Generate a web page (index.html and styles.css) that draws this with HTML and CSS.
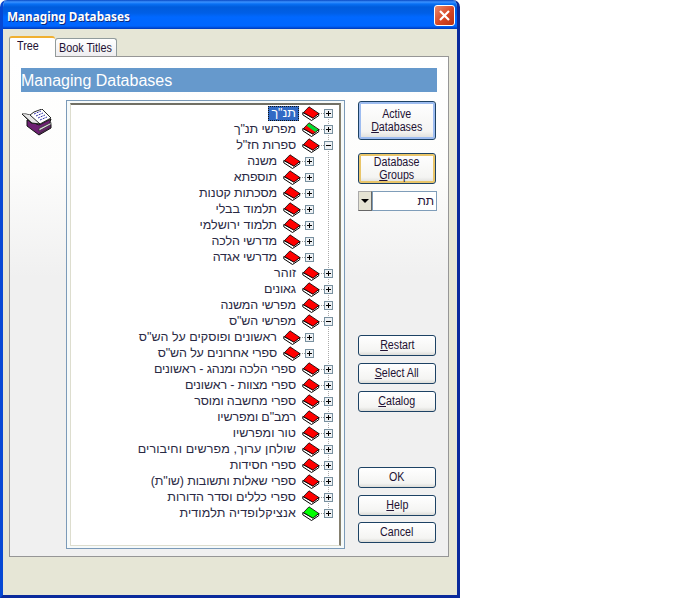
FILE: index.html
```html
<!DOCTYPE html>
<html lang="en">
<head>
<meta charset="utf-8">
<title>Managing Databases</title>
<link rel="stylesheet" href="styles.css">
</head>
<body>
<svg class="defs" width="0" height="0">
<symbol id="book" viewBox="0 0 18 15">
<path d="M.8 6.500v2.300L9.500 14.500l7.200-4.800v-2.200L10.500 11.800z" fill="#fff" stroke="#000"/>
<path d="M1.500 6.500L7 .8l9.800 6.600L11 12.200z" fill="currentColor" stroke="#000" stroke-width=".8"/>
</symbol>
<symbol id="half" viewBox="0 0 18 15">
<use href="#book"/><path d="M7 1.300L16.300 7.400 13.300 9.900 4.600 3.700z" fill="#0d3"/>
</symbol>
</svg>
<main class="window">
<header class="titlebar"><h1>Managing Databases</h1>
<button class="close" aria-label="Close"><svg width="11" height="11"><path d="M1 1l9 9M10 1L1 10" stroke="#fff" stroke-width="2.200"/></svg></button></header>
<nav class="tabs"><span class="tab active"><span>Tree</span></span><span class="tab"><span>Book Titles</span></span></nav>
<section class="panel">
<h2>Managing Databases</h2>
<div class="content">
<svg class="logo" width="33" height="28" viewBox="0 0 33 28">
<path d="M6 11v6l12 9 12-7v-3l-1-3 1-3-12 6z" fill="#6d2072" stroke="#111"/>
<path d="M18 19.500l12-6v2l-12 6.500zM18 24.500l12-6.500" fill="#ddd" stroke="#333" stroke-width=".8"/>
<path d="M1 5h4l4 1 4-3 8-3 9 9-11 6-9-1z" fill="#fff" stroke="#111" stroke-width=".9"/>
<path d="M1 5l10 9 8 1L9 6" fill="#e8e8e8" stroke="#111" stroke-width=".9"/>
<path d="M13 5l7-3M15 7l7-3M17 9l7-3M19 11l7-3" stroke="#33a" stroke-dasharray="2 1"/>
</svg>
<div class="frame"><ul class="tree" dir="rtl" lang="he">
<li><i class="plus"></i><svg><use href="#book"/></svg><span class="selected">תנ"ך</span></li>
<li><i class="plus"></i><svg><use href="#half"/></svg><span class="tight">מפרשי תנ"ך</span></li>
<li><i></i><svg><use href="#book"/></svg><span class="tight">ספרות חז"ל</span></li>
<li class="child"><i class="plus"></i><svg><use href="#book"/></svg><span class="tight">משנה</span></li>
<li class="child"><i class="plus"></i><svg><use href="#book"/></svg><span class="tight">תוספתא</span></li>
<li class="child"><i class="plus"></i><svg><use href="#book"/></svg><span class="tight">מסכתות קטנות</span></li>
<li class="child"><i class="plus"></i><svg><use href="#book"/></svg><span>תלמוד בבלי</span></li>
<li class="child"><i class="plus"></i><svg><use href="#book"/></svg><span>תלמוד ירושלמי</span></li>
<li class="child"><i class="plus"></i><svg><use href="#book"/></svg><span class="tight">מדרשי הלכה</span></li>
<li class="child"><i class="plus"></i><svg><use href="#book"/></svg><span class="tight">מדרשי אגדה</span></li>
<li><i class="plus"></i><svg><use href="#book"/></svg><span>זוהר</span></li>
<li><i class="plus"></i><svg><use href="#book"/></svg><span class="tight">גאונים</span></li>
<li><i class="plus"></i><svg><use href="#book"/></svg><span class="tight">מפרשי המשנה</span></li>
<li><i></i><svg><use href="#book"/></svg><span class="tight">מפרשי הש"ס</span></li>
<li class="child"><i class="plus"></i><svg><use href="#book"/></svg><span>ראשונים ופוסקים על הש"ס</span></li>
<li class="child"><i class="plus"></i><svg><use href="#book"/></svg><span class="tight">ספרי אחרונים על הש"ס</span></li>
<li><i class="plus"></i><svg><use href="#book"/></svg><span class="tight">ספרי הלכה ומנהג - ראשונים</span></li>
<li><i class="plus"></i><svg><use href="#book"/></svg><span class="tight">ספרי מצוות - ראשונים</span></li>
<li><i class="plus"></i><svg><use href="#book"/></svg><span class="tight">ספרי מחשבה ומוסר</span></li>
<li><i class="plus"></i><svg><use href="#book"/></svg><span class="tight">רמב"ם ומפרשיו</span></li>
<li><i class="plus"></i><svg><use href="#book"/></svg><span>טור ומפרשיו</span></li>
<li><i class="plus"></i><svg><use href="#book"/></svg><span class="loose">שולחן ערוך, מפרשים וחיבורים</span></li>
<li><i class="plus"></i><svg><use href="#book"/></svg><span class="tight">ספרי חסידות</span></li>
<li><i class="plus"></i><svg><use href="#book"/></svg><span class="tight">ספרי שאלות ותשובות (שו"ת)</span></li>
<li><i class="plus"></i><svg><use href="#book"/></svg><span>ספרי כללים וסדר הדורות</span></li>
<li><i class="plus"></i><svg class="green"><use href="#book"/></svg><span class="loose">אנציקלופדיה תלמודית</span></li>
</ul></div>
<div class="side">
<button class="tall focus"><span>Active<br><u>D</u>atabases</span></button>
<button class="mid hot"><span>Database<br><u>G</u>roups</span></button>
<div class="combo"><span class="drop"></span><span class="value">תת</span></div>
<button class="restart"><span><u>R</u>estart</span></button>
<button><span><u>S</u>elect All</span></button>
<button><span><u>C</u>atalog</span></button>
<button class="ok"><span>OK</span></button>
<button><span><u>H</u>elp</span></button>
<button class="cancel"><span>Cancel</span></button>
</div>
</div>
</section>
</main>
</body>
</html>
```
FILE: styles.css
```css
* { box-sizing: border-box; }
body { margin: 0; background: #fff; font: 12px/13px "Liberation Sans", Arial, sans-serif; color: #213; overflow: hidden; }
.defs { display: block; height: 0; }
h1, h2, ul { margin: 0; padding: 0; }
.window { width: 460px; height: 598px; background: #e6e6d6; border: solid #0a2a9c; border-width: 0 3px 3px; border-left-color: #0648d4; border-radius: 7px 7px 0 0; overflow: hidden; }
.titlebar { height: 29px; margin: 0 -3px; padding: 0 5px 0 7px; display: flex; align-items: center; justify-content: space-between; background: linear-gradient(#0848c4 0, #3b92ff 2px, #0870f4 4px, #005cdc 7px, #005fe6 13px, #0068ff 17px, #0066ff 26px, #0038b8 29px); }
h1 { font: bold 12.500px/18px "Noto Sans", sans-serif; color: #fff; text-shadow: 1px 1px #0a2a80; padding-top: 4px; transform-origin: left; transform: scaleX(.94); }
.close { width: 21px; height: 21px; margin-top: 2px; padding: 0; border: 1px solid #fff; border-radius: 3px; background: linear-gradient(135deg, #e98a6c, #d84624 55%, #b93213); display: grid; place-items: center; }
.tabs { height: 27px; padding: 7px 0 0 6px; display: flex; align-items: flex-end; }
.tab { height: 18px; border: 1px solid #919b9c; border-bottom: 0; border-radius: 3px 3px 0 0; background: linear-gradient(#fff, #eeedf0); width: 62px; padding: 3px 0 0 3px; white-space: nowrap; }
.tab span { display: inline-block; transform: scaleX(.9); transform-origin: left; }
.tab.active { width: 46px; height: 21px; padding: 2px 0 0 7px; background: #fff; border-top: 2px solid #f0b030; border-right-width: 0; margin-bottom: -1px; z-index: 1; position: relative; }
.panel { margin-left: 6px; width: 440px; height: 501px; border: 1px solid #969696; padding: 11px; background: linear-gradient(#fff, #fdfdfc 110px, #f0f0f0 220px); }
h2 { height: 24px; width: 416px; background: #6699cc; color: #fff; font: 16px/25px "Liberation Sans", sans-serif; }
.content { display: flex; }
.logo { margin: 17px 12px 0 0; flex: none; }
.frame { margin-top: 8px; width: 279px; height: 449px; border: 1px solid #7b9ab8; padding: 2px 3px 3px; background: #f6fafa; flex: none; }
.tree { height: 443px; border: 1px solid #ddddce; border-top: 2px solid #716f64; border-right: 2px solid #85806f; list-style: none; padding: 0 6px 0 0; background: #fff; font-size: 12.500px; position: relative; color: #2a2a44; }
.tree::after { content: ""; position: absolute; right: 10px; top: 8px; width: 1px; height: 400px; background: repeating-linear-gradient(#aaa 0 1px, transparent 1px 2px); }
li { height: 16px; display: flex; align-items: center; white-space: nowrap; }
li.child { padding-right: 19px; }
li i { width: 9px; height: 9px; border: 1px solid #78909f; background: linear-gradient(#000, #000) center / 5px 1px no-repeat, #eef1f4; position: relative; z-index: 1; flex: none; }
li i.plus { background: linear-gradient(#000, #000) center / 5px 1px no-repeat, linear-gradient(#000, #000) center / 1px 5px no-repeat, #eef1f4; }
li i::after { content: ""; position: absolute; right: 8px; top: 3px; width: 5px; border-top: 1px dotted #999; }
li svg { width: 18px; height: 15px; color: #f00; margin-right: 4px; flex: none; }
li svg.green { color: #0f0; }
li span { margin-right: 5px; line-height: 15px; padding: 0 1px; }
.tight { letter-spacing: -.13px; }
.loose { letter-spacing: .13px; }
.selected { background: #316ac5; color: #fff; outline: 1px dotted #111; outline-offset: -1px; padding: 0 3px; margin-right: 3px; }
.side { margin: 9px 0 0 13px; width: 79px; display: flex; flex-direction: column; }
button { font: inherit; color: #213; }
.side button { width: 78px; height: 21px; margin-bottom: 7px; border: 1px solid #1d4264; border-radius: 3px; padding: 0; background: linear-gradient(#fff, #f4f4f2 80%, #dcdcd8); flex: none; }
.side button span { display: inline-block; transform: scaleX(.89); }
.side .tall { height: 39px; margin-bottom: 13px; }
.side .mid { height: 31px; margin-bottom: 7px; }
.side .focus { box-shadow: inset 0 0 0 2px #9dbcf0; }
.side .hot { box-shadow: inset 0 0 0 2px #e9c569; }
.combo { height: 20px; display: flex; flex: none; }
.drop { width: 14px; background: #e5e3d3; border: 1px solid #aaa; border-right-color: #666; border-bottom-color: #666; display: grid; place-items: center; }
.drop::after { content: ""; border: 4px solid transparent; border-top-color: #000; border-bottom: 0; }
.value { flex: 1; border: 1px solid #7f9db9; background: #fff; text-align: right; padding: 3px 2px; }
.side .restart { margin-top: 124px; }
.side .ok { margin-top: 48px; }
.side .cancel { margin-top: -1px; }
```
